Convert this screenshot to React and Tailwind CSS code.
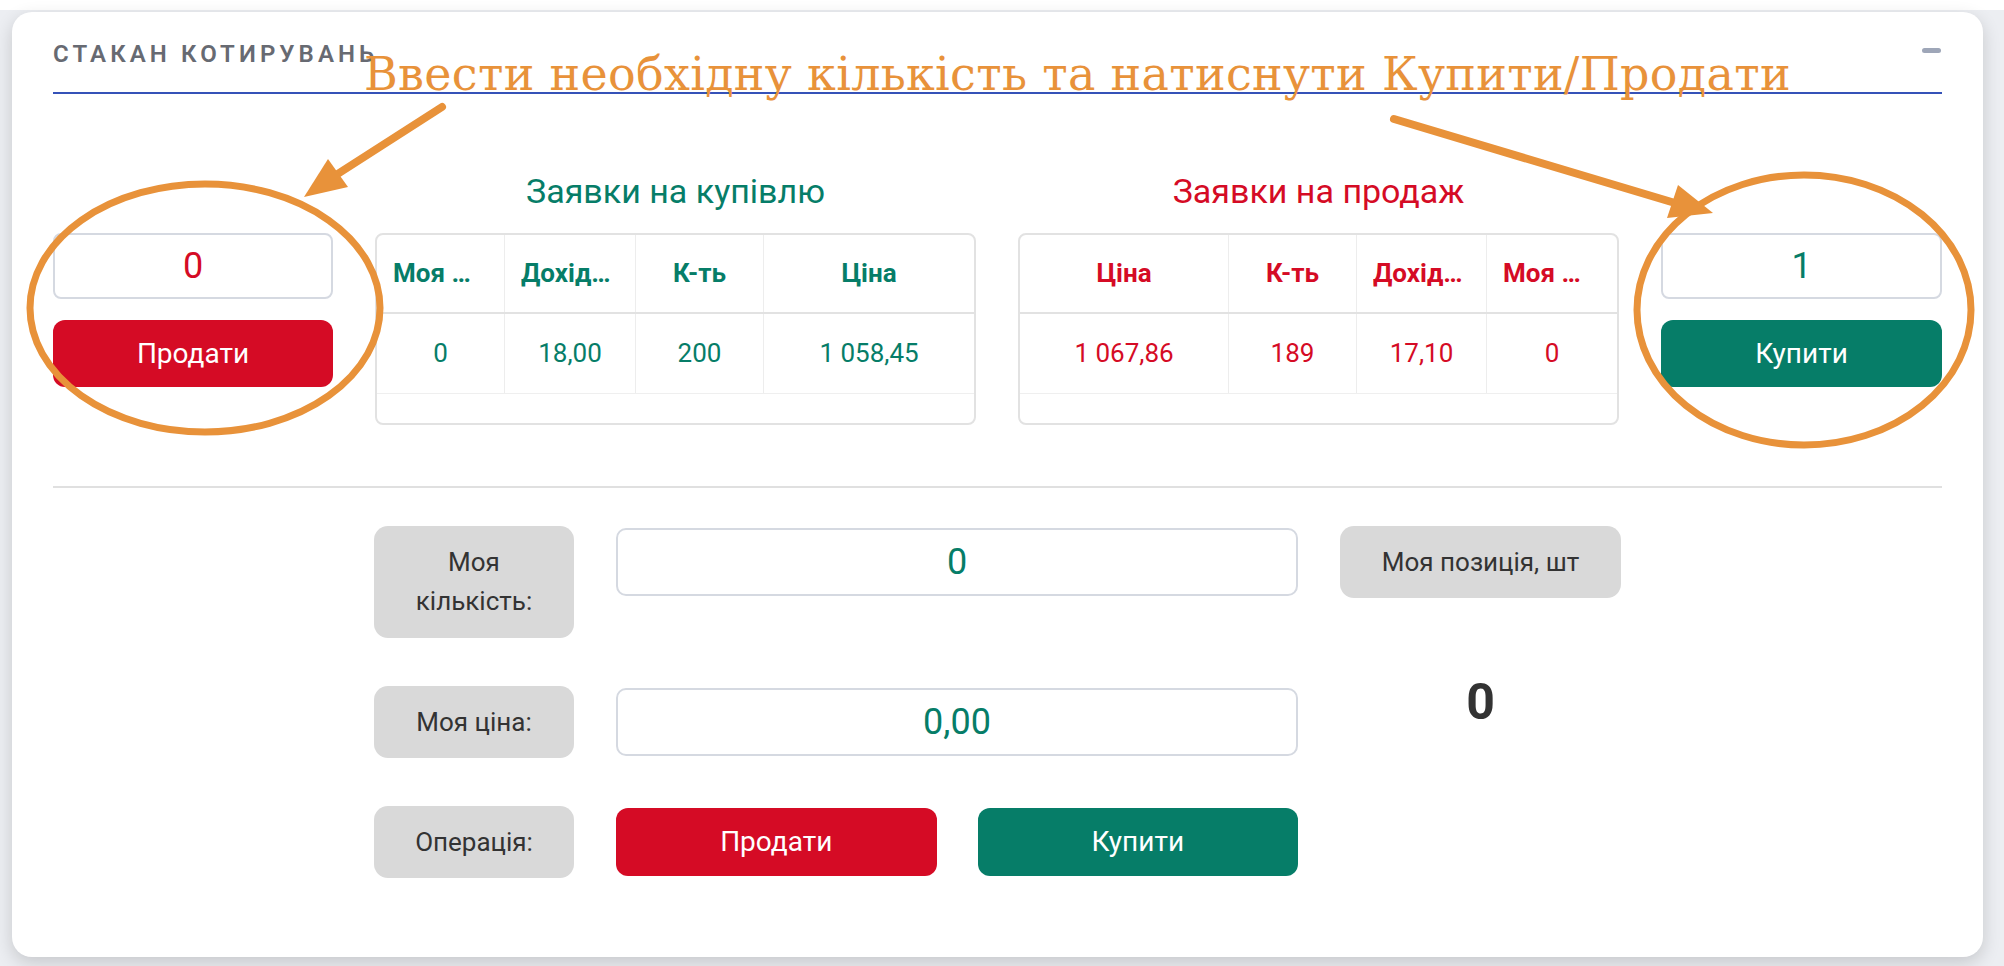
import React from "react";
import clsx from "clsx";

const buyHeaders = ["Моя кількість", "Дохідність", "К-ть", "Ціна"];
const buyValues = ["0", "18,00", "200", "1 058,45"];
const sellHeaders = ["Ціна", "К-ть", "Дохідність", "Моя кількість"];
const sellValues = ["1 067,86", "189", "17,10", "0"];

function OrderTable({ cols, headers, values, tone }) {
  return (
    <div className="h-[192px] overflow-hidden rounded-lg border-2 border-[#e2e2e2] bg-white">
      <div className={clsx("grid h-[79px] border-b-2 border-[#e2e2e2]", cols)}>
        {headers.map((h, i) => (
          <div
            key={h}
            className={clsx(
              "flex min-w-0 items-center pl-[16px]",
              h === "Моя кількість" ? "pr-[26px]" : "pr-[16px]",
              i > 0 && "border-l border-[#ededed]"
            )}
          >
            <span className={clsx("block w-full truncate text-center text-[26px] font-bold", tone)}>{h}</span>
          </div>
        ))}
      </div>
      <div className={clsx("grid h-[80px] border-b border-[#efefef]", cols)}>
        {values.map((v, i) => (
          <div
            key={i}
            className={clsx("flex items-center justify-center text-[26px]", tone, i > 0 && "border-l border-[#ededed]")}
          >
            {v}
          </div>
        ))}
      </div>
    </div>
  );
}

function Label({ children, tall }) {
  return (
    <div
      className={clsx(
        "flex items-center justify-center rounded-[14px] bg-[#d9d9d9] px-[20px] text-center text-[26px] leading-[39px] text-[#333333]",
        tall ? "py-[17px]" : "h-[72px]"
      )}
    >
      {children}
    </div>
  );
}

export default function App() {
  return (
    <div className="relative h-[966px] w-[2004px] overflow-hidden bg-white font-['Roboto',sans-serif]">
      <div className="mt-[10px] h-[956px] bg-[#eceef2] pl-[12px] pr-[21px] pt-[2px]">
        <div className="h-[945px] rounded-[20px] bg-white px-[41px] shadow-[0_6px_18px_rgba(0,0,0,0.16)]">
          {/* header */}
          <div className="flex items-start justify-between border-b-2 border-[#3552b8] pb-[26px] pt-[30px]">
            <h1 className="text-[24px] font-semibold leading-6 tracking-[0.17em] text-[#676a72]">СТАКАН КОТИРУВАНЬ</h1>
            <span className="mr-[1px] mt-[6px] block h-[5px] w-[19px] rounded-sm bg-[#9ea6b8]" />
          </div>

          {/* order book */}
          <div className="mt-[77px] grid grid-cols-[280px_1fr_1fr_281px] gap-x-[42px] gap-y-[22px]">
            <div />
            <h2 className="text-center text-[34px] leading-[40px] text-[#067d68]">Заявки на купівлю</h2>
            <h2 className="text-center text-[34px] leading-[40px] text-[#d50b25]">Заявки на продаж</h2>
            <div />

            <div className="flex flex-col gap-[21px]">
              <input
                readOnly
                value="0"
                className="h-[66px] w-full rounded-lg border-2 border-[#d5d9e1] bg-white text-center text-[36px] text-[#d50b25] outline-none"
              />
              <button className="h-[67px] rounded-xl bg-[#d50b25] text-[28px] text-white">Продати</button>
            </div>

            <OrderTable
              cols="grid-cols-[127px_131px_128px_1fr]"
              headers={buyHeaders}
              values={buyValues}
              tone="text-[#067d68]"
            />
            <OrderTable
              cols="grid-cols-[1fr_128px_130px_131px]"
              headers={sellHeaders}
              values={sellValues}
              tone="text-[#d50b25]"
            />

            <div className="flex flex-col gap-[21px]">
              <input
                readOnly
                value="1"
                className="h-[66px] w-full rounded-lg border-2 border-[#d5d9e1] bg-white text-center text-[36px] text-[#067d68] outline-none"
              />
              <button className="h-[67px] rounded-xl bg-[#067d68] text-[28px] text-white">Купити</button>
            </div>
          </div>

          <div className="mt-[61px] h-[2px] bg-[#e0e0e0]" />

          {/* my order */}
          <div className="mx-auto mt-[38px] grid w-[1247px] grid-cols-[200px_682px_281px] gap-x-[42px] gap-y-[48px]">
            <Label tall>Моя кількість:</Label>
            <input
              readOnly
              value="0"
              className="mt-[2px] h-[68px] w-full rounded-[10px] border-2 border-[#d5d9e1] bg-white text-center text-[36px] text-[#067d68] outline-none"
            />
            <div className="row-span-3 flex flex-col">
              <Label>Моя позиція, шт</Label>
              <div className="mt-[74px] text-center text-[50px] font-bold leading-[60px] text-[#333333]">0</div>
            </div>

            <Label>Моя ціна:</Label>
            <input
              readOnly
              value="0,00"
              className="mt-[2px] h-[68px] w-full rounded-[10px] border-2 border-[#d5d9e1] bg-white text-center text-[36px] text-[#067d68] outline-none"
            />

            <Label>Операція:</Label>
            <div className="mt-[2px] grid grid-cols-2 gap-x-[41px]">
              <button className="h-[68px] rounded-xl bg-[#d50b25] text-[28px] text-white">Продати</button>
              <button className="h-[68px] rounded-xl bg-[#067d68] text-[28px] text-white">Купити</button>
            </div>
          </div>
        </div>
      </div>

      {/* annotation overlay */}
      <div className="pointer-events-none absolute inset-0">
        <svg width="2004" height="966" viewBox="0 0 2004 966" fill="none">
          <ellipse cx="205" cy="308" rx="175" ry="124" stroke="#e8923a" strokeWidth="7" />
          <ellipse cx="1804" cy="310" rx="167" ry="135" stroke="#e8923a" strokeWidth="7" />
          <line x1="442" y1="107" x2="336" y2="175" stroke="#e8923a" strokeWidth="8" strokeLinecap="round" />
          <polygon points="328,159 348,187 304,197" fill="#e8923a" />
          <line x1="1394" y1="119" x2="1675" y2="203" stroke="#e8923a" strokeWidth="8" strokeLinecap="round" />
          <polygon points="1678,185 1667,218 1713,213" fill="#e8923a" />
        </svg>
        <div className="absolute left-[364px] top-[51px] whitespace-nowrap font-['DejaVu_Serif',serif] text-[46px] leading-[46px] tracking-[0.3px] text-[#e8923a]">
          Ввести необхідну кількість та натиснути Купити/Продати
        </div>
      </div>
    </div>
  );
}
